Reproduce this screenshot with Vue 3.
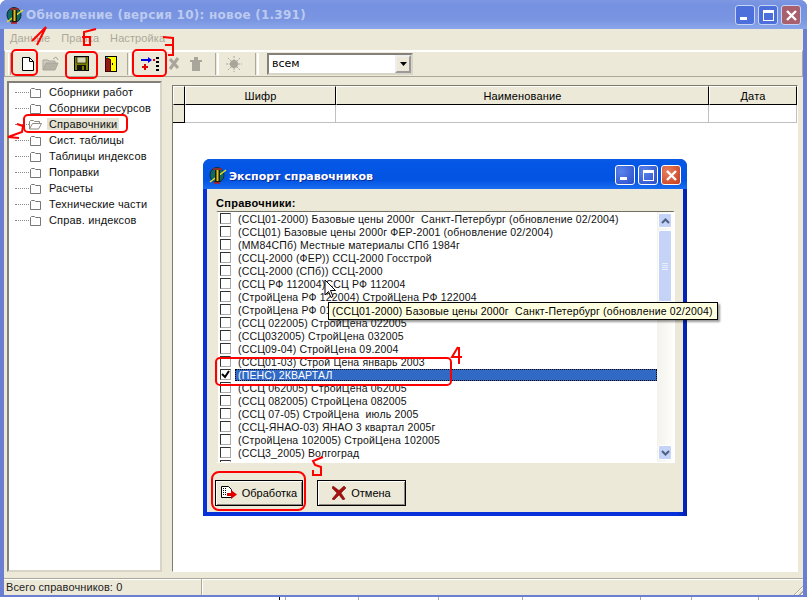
<script setup>
const tree = ['Сборники работ','Сборники ресурсов','Справочники','Сист. таблицы','Таблицы индексов','Поправки','Расчеты','Технические части','Справ. индексов']
const rows = [
 '(ССЦ01-2000) Базовые цены 2000г  Санкт-Петербург (обновление 02/2004)',
 '(ССЦ01) Базовые цены 2000г ФЕР-2001 (обновление 02/2004)',
 '(ММ84СПб) Местные материалы СПб 1984г',
 '(ССЦ-2000 (ФЕР)) ССЦ-2000 Госстрой',
 '(ССЦ-2000 (СПб)) ССЦ-2000',
 '(ССЦ РФ 112004)ССЦ РФ 112004',
 '(СтройЦена РФ 122004) СтройЦена РФ 122004',
 '(СтройЦена РФ 012005) СтройЦена РФ 012005',
 '(ССЦ 022005) СтройЦена 022005',
 '(ССЦ032005) СтройЦена 032005',
 '(ССЦ09-04) СтройЦена 09.2004',
 '(ССЦ01-03) Строй Цена январь 2003',
 '(ПЕНС) 2КВАРТАЛ',
 '(ССЦ 062005) СтройЦена 062005',
 '(ССЦ 082005) СтройЦена 082005',
 '(ССЦ 07-05) СтройЦена  июль 2005',
 '(ССЦ-ЯНАО-03) ЯНАО 3 квартал 2005г',
 '(СтройЦена 102005) СтройЦена 102005',
 '(ССЦ3_2005) Волгоград',
 '(ССЦ 092005) СтройЦена 092005'
]
const tip = rows[0]
</script>

<template>
  <div class="screen">
    <div class="win">
      <div class="title">
        <svg class="appicon" width="18" height="20" viewBox="0 0 18 20"><ellipse cx="8" cy="10" rx="7" ry="7.500" fill="#0f6a60" stroke="#0a2a3a"/><path d="M1 17L17 5" stroke="#e8e020" stroke-width="1.500"/><rect x="6" y="5" width="5" height="12" fill="#1a1a10"/><rect x="7.500" y="5" width="2" height="11" fill="#e0c020"/><path d="M4 4h9" stroke="#b02020" stroke-width="1.500"/><path d="M5 18h6" stroke="#c01818" stroke-width="1.500"/></svg>
        <span class="title-text">Обновление (версия 10): новое (1.391)</span>
        <span class="caps">
          <span class="cap min"><i></i></span>
          <span class="cap max"><i></i></span>
          <span class="cap close"><svg width="13" height="13" viewBox="0 0 13 13"><path d="M2 2l9 9M11 2l-9 9" stroke="#fff" stroke-width="2.400"/></svg></span>
        </span>
      </div>
      <div class="body">
        <div class="menu"><span>Данные</span><span>Правка</span><span>Настройка</span></div>
        <div class="toolbar">
          <span class="grip"></span>
          <span class="tb w28"><svg width="12" height="14" viewBox="0 0 12 14"><path d="M.5 .5h7l4 4v9h-11z" fill="#fff" stroke="#000"/><path d="M7.500 .5v4h4" fill="none" stroke="#000"/></svg></span>
          <span class="tb w18"><svg width="18" height="16" viewBox="0 0 18 16"><path d="M1 14V4h5l1 1h6v2" fill="#d0ccc0" stroke="#a8a59a"/><path d="M1 14l3-7h12l-3 7z" fill="#b5b2a6" stroke="#a8a59a"/><path d="M11 3l3-2 2 3" fill="none" stroke="#a8a59a"/></svg></span>
          <span class="tb w42"><svg width="15" height="15" viewBox="0 0 15 15"><rect x=".5" y=".5" width="14" height="14" fill="#808000" stroke="#000"/><rect x="3" y="1" width="9" height="6" fill="#d8d8b0" stroke="#000" stroke-width=".6"/><rect x="3" y="9" width="9" height="6" fill="#111"/><rect x="8" y="10" width="2" height="4" fill="#808000"/></svg></span>
          <span class="tb w18"><svg width="12" height="16" viewBox="0 0 12 16"><rect x=".5" y=".5" width="11" height="15" fill="#ffff00" stroke="#000"/><path d="M.5 1.500l5 2v12h-5z" fill="#901818" stroke="#400"/><rect x="1" y="1" width="2" height="1" fill="#20c0d0"/><rect x="7" y="7" width="1" height="2" fill="#000"/></svg></span>
          <span class="sep s-a"></span>
          <span class="tb w32"><svg width="18" height="14" viewBox="0 0 18 14"><path d="M0 3h8" stroke="#0000e0" stroke-width="2"/><path d="M7 0v6l4-3z" fill="#0000e0"/><path d="M12 2h2v2h-2z" fill="#e00000"/><path d="M1 10h6M4 7v6" stroke="#e00000" stroke-width="2"/><path d="M15 1h3M15 5h3M15 9h3M15 13h3" stroke="#000" stroke-width="2"/></svg></span>
          <span class="tb w16"><svg width="12" height="14" viewBox="0 0 12 14"><path d="M2 2l8 9M10 1L2 12" stroke="#a8a59a" stroke-width="3"/></svg></span>
          <span class="tb w28"><svg width="14" height="16" viewBox="0 0 14 16"><path d="M3 5h8v10H3zM5 1h4v3H5zM1 4h12v2H1z" fill="#a8a59a"/></svg></span>
          <span class="sep s-b"></span>
          <span class="tb w24"><svg width="18" height="18" viewBox="0 0 18 18"><circle cx="9" cy="9" r="4" fill="#a8a59a"/><path d="M9 1v16M1 9h16M3 3l12 12M15 3L3 15" stroke="#a8a59a" stroke-dasharray="2 1"/></svg></span>
          <span class="sep s-c"></span>
          <span class="combo"><span>всем</span><b><svg width="7" height="4" viewBox="0 0 7 4"><path d="M0 0h7L3.500 4z" fill="#000"/></svg></b></span>
        </div>
        <div class="main">
          <ul class="tree">
            <li v-for="(t,i) in tree" :key="t">
              <span class="dots"></span>
              <svg class="folder" width="13" height="11" viewBox="0 0 13 11">
                <path v-if="i===2" d="M.5 10V2.500l1-1h3l1 1h5v2M.500 10l3-5.500h9l-3 5.500z" fill="#fff" stroke="#8c897e"/>
                <path v-else d="M1.500 10.500V2.500l1-1h3l1 1h5v8z" fill="#fff" stroke="#777"/>
              </svg>
              <span class="t" :class="{sel:i===2}">{{ t }}</span>
            </li>
          </ul>
          <div class="split"></div>
          <div class="grid-area">
            <div class="grid-head">
              <span class="c c0"></span><span class="c c1">Шифр</span><span class="c c2">Наименование</span><span class="c c3">Дата</span>
            </div>
            <div class="grid-row">
              <span class="c c0 fixed"></span><span class="c c1"></span><span class="c c2"></span><span class="c c3"></span>
            </div>
          </div>
        </div>
        <div class="status"><span class="s1">Всего справочников: 0</span><span class="s2"></span><span class="sizer"></span></div>
      </div>
    </div>
    <div class="taskstrip"></div>

    <div class="dialog">
      <div class="dtitle">
        <svg class="appicon" width="18" height="20" viewBox="0 0 18 20"><ellipse cx="8" cy="10" rx="7" ry="7.500" fill="#0f6a60" stroke="#0a2a3a"/><path d="M1 17L17 5" stroke="#e8e020" stroke-width="1.500"/><rect x="6" y="5" width="5" height="12" fill="#1a1a10"/><rect x="7.500" y="5" width="2" height="11" fill="#e0c020"/><path d="M4 4h9" stroke="#b02020" stroke-width="1.500"/><path d="M5 18h6" stroke="#c01818" stroke-width="1.500"/></svg>
        <span class="dtitle-text">Экспорт справочников</span>
        <span class="caps">
          <span class="cap min act"><i></i></span>
          <span class="cap max act"><i></i></span>
          <span class="cap close act"><svg width="13" height="13" viewBox="0 0 13 13"><path d="M2 2l9 9M11 2l-9 9" stroke="#fff" stroke-width="2.400"/></svg></span>
        </span>
      </div>
      <div class="dbody">
        <div class="dlabel">Справочники:</div>
        <div class="list">
          <div class="items">
            <div v-for="(r,i) in rows" :key="i" class="item" :class="{on:i===12}">
              <span class="chk"><svg v-if="i===12" width="9" height="9" viewBox="0 0 9 9"><path d="M1 4l3 3 4-6" fill="none" stroke="#000" stroke-width="2"/></svg></span>
              <span class="lbl">{{ r }}</span>
            </div>
          </div>
          <div class="scroll">
            <span class="sbtn"><svg width="9" height="6" viewBox="0 0 9 6"><path d="M1 5l3.500-3.500L8 5" fill="none" stroke="#4d6185" stroke-width="2"/></svg></span>
            <span class="thumb"><i></i><i></i><i></i><i></i></span>
            <span class="strack"></span>
            <span class="sbtn"><svg width="9" height="6" viewBox="0 0 9 6"><path d="M1 1l3.500 3.500L8 1" fill="none" stroke="#4d6185" stroke-width="2"/></svg></span>
          </div>
        </div>
        <div class="btns">
          <button class="btn b1"><svg width="16" height="14" viewBox="0 0 16 14"><path d="M.5 .5h7l3 3v8H.500z" fill="#fff" stroke="#000"/><path d="M2.500 2v8M4.500 2v8" stroke="#000" stroke-dasharray="1 1"/><path d="M6 7h4V4l6 4.500-6 4.500v-3H6z" fill="#e00000"/></svg>Обработка</button>
          <button class="btn b2"><svg width="14" height="14" viewBox="0 0 14 14"><path d="M1 0l6 4.500L12 0l2 2-5 5 4 6-2 1-4-5-5 5-2-1 5-6L0 2z" fill="#a81010" stroke="#600" stroke-width=".5"/></svg>Отмена</button>
        </div>
      </div>
    </div>

    <div class="tip">{{ tip }}</div>

    <svg class="marks" width="807" height="600" viewBox="0 0 807 600" fill="none" stroke="#f00" stroke-width="2">
      <rect x="12" y="50" width="25" height="25" rx="4"/>
      <rect x="66" y="52" width="31" height="26" rx="4"/>
      <rect x="133" y="50" width="33" height="26" rx="4"/>
      <rect x="24" y="115" width="103" height="17" rx="4"/>
      <rect x="216" y="358" width="235" height="27" rx="4"/>
      <rect x="212" y="472" width="93" height="38" rx="7"/>
      <path d="M32 41L46 27L37 45"/>
      <path d="M96 29L84 32V45H90V37H82"/>
      <path d="M163 37L173 38V55H168M165 45H173"/>
      <path d="M17 124L23 126L22 132L8 137L19 138"/>
      <path d="M458 347L452 357H462M459 347V364"/>
      <path d="M323 457L313 461L315 465L321 467V475H313V470"/>
      <g stroke="#000" stroke-width="1" fill="#fff"><path d="M325 280v15l3.500-3.500 2.500 6 2-1-2.500-6h5z"/></g>
    </svg>
  </div>
</template>

<style>
html,body{margin:0;background:#fff}
</style>
<style scoped>
.screen{position:relative;width:807px;height:600px;overflow:hidden;background:#fff;font:11px "Liberation Sans",Arial,sans-serif;color:#000}
.win{width:807px;height:597px;box-sizing:border-box;display:flex;flex-direction:column;background:#6a7fd2;border-radius:7px 7px 0 0}
.title{height:29px;flex:none;box-sizing:border-box;display:flex;align-items:center;padding:1px 6px 0 6px;background:linear-gradient(#7e97e2,#7490e0 20%,#7a96e2 70%,#8aa6ea);border-radius:7px 7px 0 0}
.appicon{flex:none}
.title-text{margin-left:2px;flex:1;font:bold 12px "DejaVu Sans",sans-serif;color:#bccaf0;white-space:pre;letter-spacing:.25px}
.caps{display:flex;gap:3px}
.cap{width:20px;height:20px;box-sizing:border-box;border:1px solid #c8d4f4;border-radius:3px;background:#4c6fdc;display:flex;align-items:center;justify-content:center;position:relative}
.cap.close{background:#a8606c}
.cap.min i{position:absolute;left:4px;bottom:4px;width:7px;height:3px;background:#fff}
.cap.max i{width:11px;height:11px;box-sizing:border-box;border:1px solid #fff;border-top-width:3px}
.cap.act{border-color:#fff;background:radial-gradient(circle at 30% 30%,#5a84ec,#2a4cc8)}
.cap.close.act{background:radial-gradient(circle at 30% 30%,#e88060,#c83a18)}
.body{flex:1;margin:0 4px 2px;background:#ece9d8;display:flex;flex-direction:column;min-height:0}
.menu{height:21px;flex:none;box-sizing:border-box;display:flex;align-items:center;padding:0 0 3px 6px;gap:11px;color:#aca899;font-size:11px;letter-spacing:.1px}
.toolbar{flex:none;box-sizing:content-box;display:flex;align-items:center;border:1px solid;border-color:#fff #aca899 #aca899 #aca899;padding-left:3px;box-shadow:inset 0 1px 0 #fff;height:25px}
.grip{width:1px;height:22px;border-left:1px solid #fff;border-right:1px solid #aca899;margin-right:3px}
.tb{height:24px;flex:none;display:flex;align-items:center;justify-content:center}
.w16{width:16px}.w18{width:18px}.w24{width:24px}.w28{width:28px}.w32{width:32px}.w42{width:42px}
.sep{width:2px;height:22px;flex:none;border-left:1px solid #aca899;border-right:1px solid #fff;box-shadow:inset -1px 0 #fff}
.s-a{margin:0 3px 0 7px}
.s-b{margin:0 3px 0 5px}
.s-c{margin:0 8px 0 9px}
.combo{width:146px;height:22px;flex:none;box-sizing:border-box;background:#fff;border:2px inset #d8d4c8;display:flex;align-items:center;justify-content:space-between;padding-left:3px;font-family:"DejaVu Sans",sans-serif}
.combo b{width:16px;height:18px;box-sizing:border-box;background:#ece9d8;border:2px outset #eee;display:flex;align-items:center;justify-content:center}
.main{flex:1;min-height:0;display:flex;padding:4px 5px 6px 3px}
.tree{list-style:none;margin:0;padding:1px 0 0;width:155px;flex:none;box-sizing:border-box;background:#fff;border:2px inset #d8d4c8}
.tree li{height:16px;display:flex;align-items:center;font-size:11px;letter-spacing:.15px;color:#111}
.dots{width:14px;height:0;border-top:1px dotted #888;margin-left:6px;flex:none}
.folder{flex:none;margin-right:5px}
.t{padding:0 2px;white-space:nowrap}
.t.sel{background:#e4e2d2}
.split{width:10px;flex:none}
.grid-area{flex:1;margin-top:4px;background:#fff;border:1px solid;border-color:#7d7a6e #fff #fff #7d7a6e}
.grid-head{display:flex;height:19px}
.grid-row{display:flex;height:18px}
.c{display:flex;align-items:center;justify-content:center;box-sizing:border-box;flex:none;letter-spacing:.15px}
.grid-head .c{background:#ece9d8;border:1px solid;border-color:#fff #000 #000 #fff;padding-top:1px}
.grid-row .c{background:#fff;border-right:1px solid #c0c0c0;border-bottom:1px solid #c0c0c0}
.grid-row .c0.fixed{background:#ece9d8;border-color:#000}
.c0{width:12px}.c1{width:151px}.c2{width:373px}.c3{width:88px}
.status{height:17px;flex:none;display:flex;border-top:1px solid #aca899;box-shadow:inset 0 1px 0 #fff;box-sizing:border-box;font-size:11px;letter-spacing:.1px;position:relative}
.s1{width:198px;box-sizing:border-box;padding:2px 0 0 2px;border-right:1px solid #aca899;color:#222}
.s2{flex:1;border-left:1px solid #fff}
.sizer{position:absolute;right:0;bottom:0;width:12px;height:12px;background:repeating-linear-gradient(135deg,transparent 0 2px,#aca899 2px 3px,#fff 3px 4px);clip-path:polygon(100% 0,100% 100%,0 100%)}
.taskstrip{height:3px;background-color:#fff;background-image:linear-gradient(#000,#000),linear-gradient(#aaa,#aaa),linear-gradient(#aaa,#aaa),linear-gradient(#aaa,#aaa),linear-gradient(#aaa,#aaa),linear-gradient(#aaa,#aaa),linear-gradient(#aaa,#aaa),linear-gradient(#aaa,#aaa);background-size:1px 3px;background-repeat:no-repeat;background-position:279px 0,285px 0,358px 0,438px 0,522px 0,640px 0,691px 0,758px 0}
.dialog{position:absolute;left:203px;top:159px;width:484px;height:357px;box-sizing:border-box;background:linear-gradient(90deg,#0831d9 0,#0831d9 98%,#0020b0);border-radius:7px 7px 0 0;display:flex;flex-direction:column;padding:0 4px 4px}
.dtitle{height:30px;flex:none;box-sizing:border-box;margin:0 -4px;padding:2px 6px 0 6px;display:flex;align-items:center;background:linear-gradient(#0a5ae4,#0456e6 15%,#0354e2 70%,#1a6cf0);border-radius:7px 7px 0 0}
.dtitle-text{flex:1;margin-left:2px;padding-top:2px;color:#fff;font:bold 11px "DejaVu Sans",sans-serif;text-shadow:1px 1px #0a2a9a}
.dbody{flex:1;background:#ece9d8;padding:8px 8px 0 9px;display:flex;flex-direction:column;min-height:0}
.dlabel{font:bold 11px "Liberation Sans",sans-serif;height:14px;letter-spacing:.3px}
.list{height:252px;flex:none;box-sizing:border-box;background:#fff;border:solid;border-width:1px 2px 1px;border-color:#716f64 #fff #fff #ece9d8;display:flex;overflow:hidden}
.items{flex:1;overflow:hidden}
.item{height:13px;display:flex;align-items:center;padding-left:2px;white-space:pre}
.chk{width:11px;height:11px;box-sizing:border-box;border:1px solid #333;border-right-color:#aaa;border-bottom-color:#aaa;margin-right:4px;flex:none;display:flex;align-items:center;justify-content:center;background:#fff}
.lbl{flex:1;padding-left:3px;letter-spacing:.17px;font-size:10.500px;color:#111}
.item.on .lbl{background:#316ac5;color:#fff;outline:1px dotted #000;outline-offset:-1px}
.scroll{width:16px;flex:none;box-sizing:border-box;display:flex;flex-direction:column;background:linear-gradient(90deg,#f3f2ec,#fdfdfa);padding:1px 1px 2px}
.sbtn{width:14px;height:15px;flex:none;box-sizing:border-box;border:1px solid #fff;border-radius:2px;background:#c4d3f6;display:flex;align-items:center;justify-content:center}
.thumb{height:72px;flex:none;margin-top:2px;border:1px solid #fff;border-radius:2px;background:#c4d3f6;display:flex;flex-direction:column;align-items:center;justify-content:center;gap:1px;box-sizing:border-box;width:14px}
.thumb i{width:6px;height:1px;background:#e8eefc}
.strack{flex:1}
.btns{display:flex;gap:14px;padding-top:17px;margin-left:-1px}
.btn{height:26px;box-sizing:border-box;display:flex;align-items:center;justify-content:center;gap:5px;padding:0;background:#ece9d8;border:1px solid #000;box-shadow:inset 1px 1px #fff,inset -1px -1px #8c897e;font:11px "Liberation Sans",sans-serif;color:#000}
.b1{width:88px}
.b2{width:89px}
.tip{position:absolute;left:328px;top:302px;width:390px;height:18px;padding:0 3px;display:flex;align-items:center;background:#ffffe1;border:1px solid #000;white-space:pre;font-size:10.500px;letter-spacing:.17px;box-shadow:2px 2px 2px rgba(0,0,0,.4);box-sizing:border-box}
.marks{position:absolute;left:0;top:0;pointer-events:none}
</style>
